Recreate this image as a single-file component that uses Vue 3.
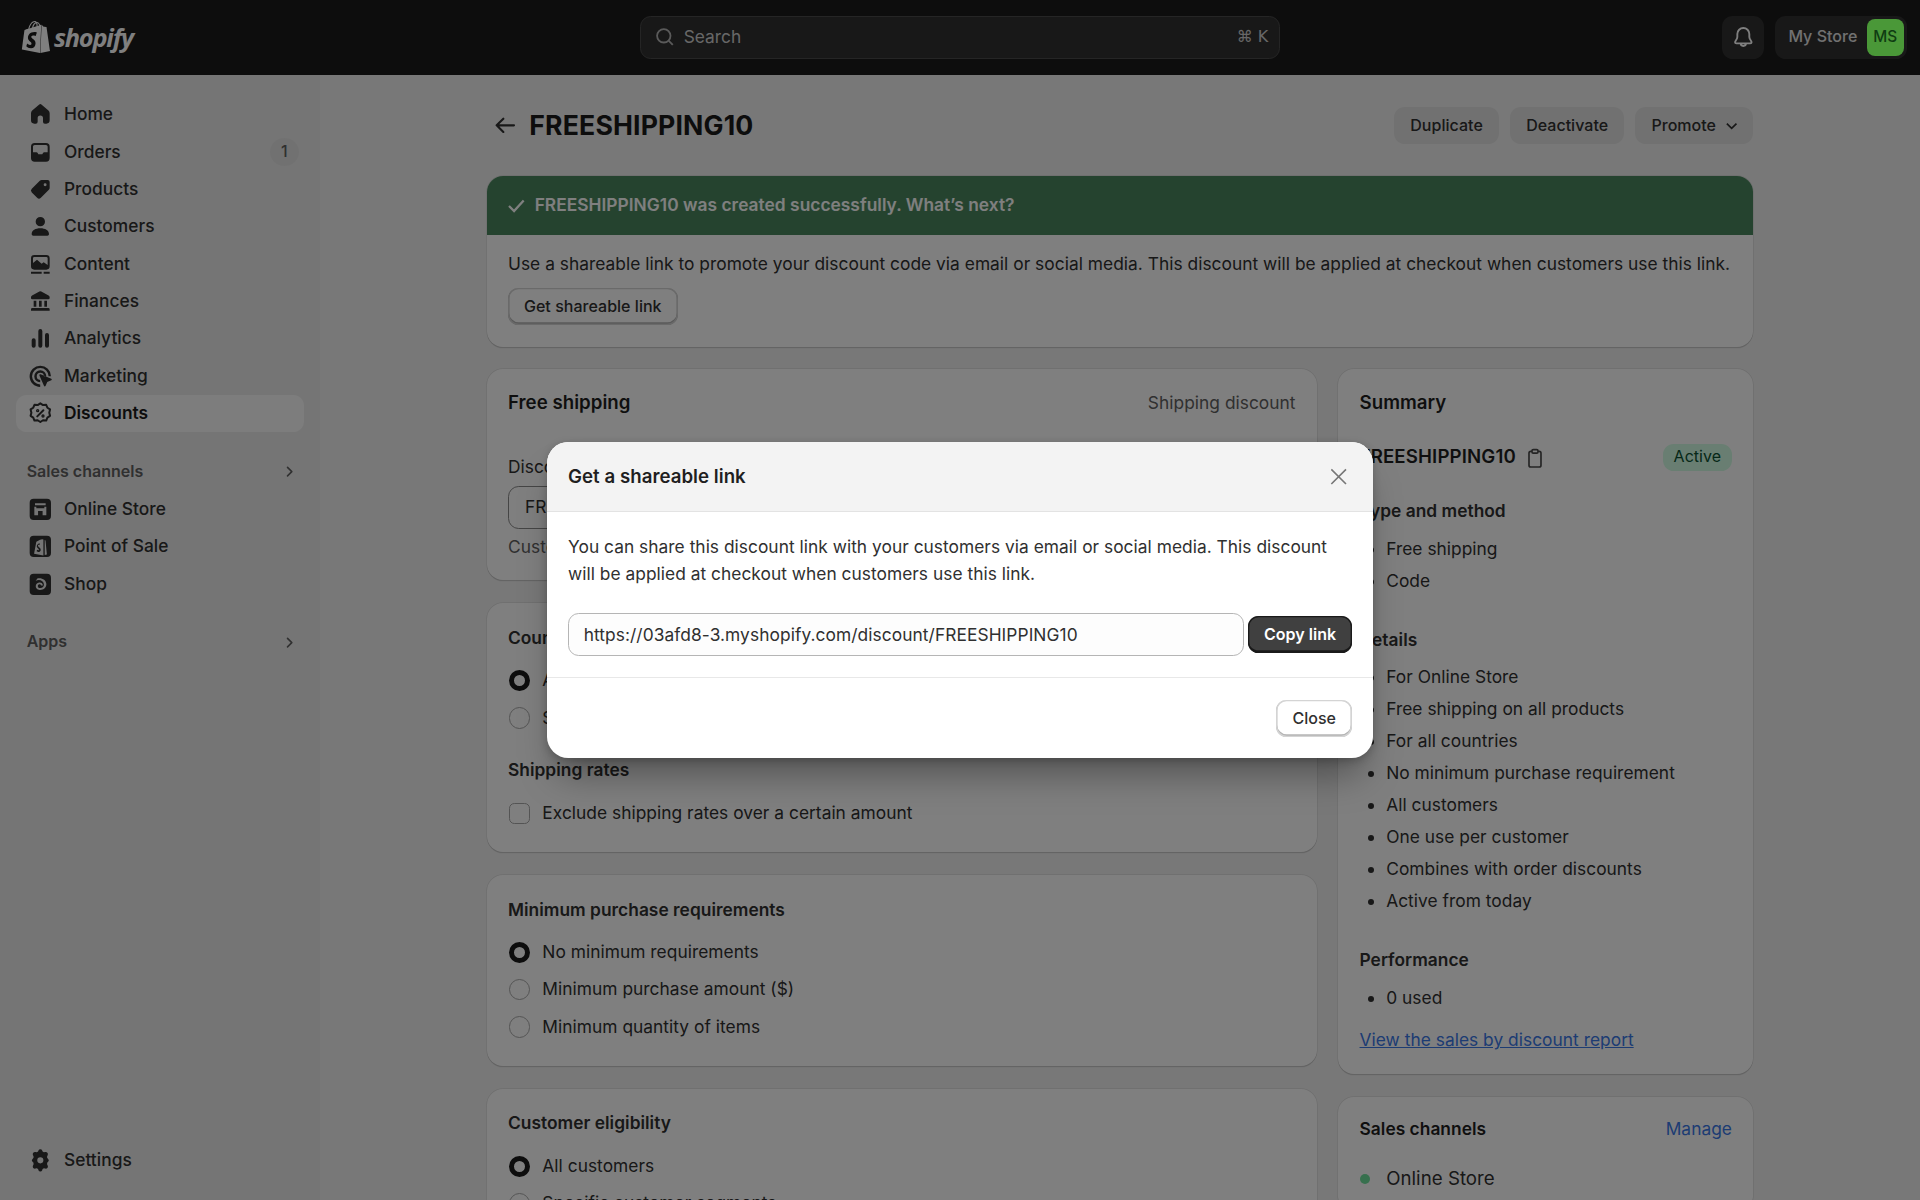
<script setup>
const navMain = [
  { label: 'Home', d: 'M9.2 2.6a1.2 1.2 0 0 1 1.6 0l5.3 4.6c.6.5.9 1.2.9 1.9v5.4a2.5 2.5 0 0 1-2.5 2.5h-1.1a1.4 1.4 0 0 1-1.4-1.4v-2.8a2 2 0 1 0-4 0v2.8A1.4 1.4 0 0 1 6.6 17H5.5A2.5 2.5 0 0 1 3 14.500V9.100c0-.7.3-1.400.9-1.900z' },
  { label: 'Orders', badge: '1', d: 'M5.75 3A2.75 2.75 0 0 0 3 5.75v8.500A2.750 2.750 0 0 0 5.750 17h8.500A2.750 2.750 0 0 0 17 14.250v-8.500A2.750 2.750 0 0 0 14.250 3zM4.500 5.750c0-.69.56-1.250 1.250-1.250h8.500c.69 0 1.250.56 1.250 1.250V10h-2.500c-.5 0-.9.3-1.100.7l-.4.8H8.500l-.4-.8c-.2-.4-.6-.7-1.100-.7H4.500z' },
  { label: 'Products', d: 'M11 3h4.500A1.500 1.500 0 0 1 17 4.500V9a2 2 0 0 1-.6 1.400l-6 6a2 2 0 0 1-2.800 0l-4-4a2 2 0 0 1 0-2.800l6-6A2 2 0 0 1 11 3zm2.600 2.400a1.100 1.100 0 1 0 0 2.200 1.100 1.100 0 0 0 0-2.200z' },
  { label: 'Customers', d: 'M10 3a3.500 3.500 0 1 1 0 7 3.500 3.500 0 0 1 0-7zM3.500 15.800c0-2.700 2.900-4.300 6.500-4.300s6.500 1.600 6.500 4.300c0 .7-.5 1.200-1.200 1.200H4.700c-.7 0-1.200-.5-1.200-1.200z' },
  { label: 'Content', d: 'M5.500 3h9A2.500 2.500 0 0 1 17 5.500v6a2.500 2.500 0 0 1-2.500 2.500h-9A2.500 2.500 0 0 1 3 11.500v-6A2.500 2.500 0 0 1 5.500 3zM4.500 9l3-2.500 3.500 3 1.500-1 3 2V5.500a1 1 0 0 0-1-1h-9a1 1 0 0 0-1 1zM3 15.500h8V17H3zM12.500 15.500H17V17h-4.500z' },
  { label: 'Finances', d: 'M9.300 2.700a1.500 1.500 0 0 1 1.400 0l5.500 2.900c.5.3.8.7.8 1.300v.6a1 1 0 0 1-1 1H4a1 1 0 0 1-1-1v-.6c0-.6.3-1 .8-1.300zM5 9.500h2V14H5zM9 9.500h2V14H9zM13 9.500h2V14h-2zM4 15h12a1 1 0 0 1 1 1v1H3v-1a1 1 0 0 1 1-1z' },
  { label: 'Analytics', d: 'M3.500 11.500a1.500 1.500 0 0 1 3 0v4a1.500 1.500 0 0 1-3 0zM8.500 4.500a1.500 1.500 0 0 1 3 0v11a1.500 1.500 0 0 1-3 0zM13.500 7.500a1.500 1.500 0 0 1 3 0v8a1.500 1.500 0 0 1-3 0z' },
  { label: 'Marketing', d: 'M10 2a8 8 0 0 1 8 7.900h-1.800A6.200 6.200 0 1 0 9.900 16.200V18A8 8 0 0 1 10 2zm0 3.500a4.500 4.500 0 0 1 4.500 4.400h-1.800a2.700 2.700 0 1 0-2.800 2.800v1.800A4.500 4.500 0 0 1 10 5.500zm-.6 3.200a.6.6 0 0 1 .8-.2l8 3.300c.5.2.5.9 0 1.100l-3 1.300-1.300 3c-.2.5-.9.500-1.100 0L9.400 9.500a.6.6 0 0 1 0-.8z' }
]
const channels = [
  { label: 'Online Store', d: 'M5 2h10a3 3 0 0 1 3 3v10a3 3 0 0 1-3 3H5a3 3 0 0 1-3-3V5a3 3 0 0 1 3-3zm1 3.500V7h8V5.500zM5.500 8v6.500h2.800v-3.200h3.400v3.200h2.800V8H13v1.200h-6V8z' },
  { label: 'Point of Sale', d: 'M5 2h10a3 3 0 0 1 3 3v10a3 3 0 0 1-3 3H5a3 3 0 0 1-3-3V5a3 3 0 0 1 3-3zm2 4.500L5.300 15.600l7 1.200V4.800a3 3 0 0 0-2.500.3zM13.300 5.200v11.400l1.600-.4L13.900 5.600zM9.700 7.800 9.400 9c-1.600-.5-1.600 1 .1 2 1.300 1.100 1 3.200-1 3.300l-1.300-.6.400-1.200c1 .7 1.500.3 1.200-.4-.7-1-1.900-1.500-1.300-3 .4-1 1.400-1.300 2.200-1.300z' },
  { label: 'Shop', d: 'M5 2h10a3 3 0 0 1 3 3v10a3 3 0 0 1-3 3H5a3 3 0 0 1-3-3V5a3 3 0 0 1 3-3zm3 3.500-1.500 1.800c3-1.300 6 0 6.200 2.700.2 2-1.700 3.300-3.500 2.700-1.500-.5-1.500-2.500 0-2.800.8-.1 1.300.4 1.300.9h1.400c0-1.500-1.300-2.400-2.800-2.200-3.200.4-3.400 4.800-.3 5.500 3 .7 6-1.500 5.700-4.500C14.200 6.600 11.200 4.800 8 5.500z' }
]
const typeItems = ['Free shipping', 'Code']
const detailItems = ['For Online Store', 'Free shipping on all products', 'For all countries', 'No minimum purchase requirement', 'All customers', 'One use per customer', 'Combines with order discounts', 'Active from today']
const minReq = [
  { label: 'No minimum requirements', on: true },
  { label: 'Minimum purchase amount ($)', on: false },
  { label: 'Minimum quantity of items', on: false }
]
</script>

<template>
  <div class="app">
    <header class="topbar">
      <div class="logo">
        <svg class="bag" viewBox="0 0 24 24"><path d="M15.337 23.979l7.216-1.561s-2.604-17.613-2.625-17.73c-.018-.116-.114-.192-.211-.192s-1.929-.136-1.929-.136-1.275-1.274-1.439-1.411c-.045-.037-.075-.057-.121-.074l-.914 21.104h.023zM11.71 11.305s-.81-.424-1.774-.424c-1.447 0-1.504.906-1.504 1.141 0 1.232 3.24 1.715 3.24 4.629 0 2.295-1.44 3.76-3.406 3.76-2.354 0-3.54-1.465-3.54-1.465l.646-2.086s1.245 1.066 2.28 1.066c.675 0 .975-.545.975-.932 0-1.619-2.654-1.694-2.654-4.359-.034-2.237 1.571-4.416 4.827-4.416 1.257 0 1.875.361 1.875.361l-.945 2.715-.02.01zM11.17.83c.136 0 .271.038.405.135-.984.465-2.064 1.639-2.508 3.992-.656.213-1.293.405-1.889.578C7.697 3.75 8.951.84 11.17.84V.83zm1.235 2.949v.135c-.754.232-1.583.484-2.394.736.466-1.777 1.333-2.645 2.085-2.971.193.501.309 1.176.309 2.1zm.539-2.234c.694.074 1.141.867 1.429 1.755-.349.114-.735.231-1.158.366v-.252c0-.752-.096-1.371-.271-1.871v.002zm2.992 1.289c-.02 0-.06.021-.078.021s-.289.075-.714.21c-.423-1.233-1.176-2.37-2.508-2.37h-.115C12.135.209 11.669 0 11.265 0 8.159 0 6.675 3.877 6.21 5.846c-1.194.365-2.063.636-2.16.674-.675.213-.694.232-.772.87-.075.462-1.83 14.063-1.83 14.063L15.009 24l.927-21.166z"/></svg>
        <span class="wordmark">shopify</span>
      </div>
      <div class="search">
        <svg class="search-icon" viewBox="0 0 20 20"><circle cx="9" cy="9" r="5.600"/><path d="M13.200 13.200 16.500 16.500"/></svg>
        <span class="search-text">Search</span>
        <span class="kbd">⌘ K</span>
      </div>
      <div class="top-actions">
        <button class="bell">
          <svg viewBox="0 0 20 20"><path d="M10 3a4.500 4.500 0 0 0-4.500 4.500v2.300c0 1-.4 1.600-1 2.400-.5.700-.7 1.100-.7 1.500 0 .4.300.8 1 .8h10.400c.7 0 1-.4 1-.8 0-.4-.2-.8-.7-1.500-.6-.8-1-1.400-1-2.400V7.500A4.500 4.500 0 0 0 10 3zM8 14.500a2 2 0 0 0 4 0"/></svg>
        </button>
        <div class="store">
          <span>My Store</span>
          <span class="avatar">MS</span>
        </div>
      </div>
    </header>

    <div class="layout">
      <nav class="sidebar">
        <ul class="nav-list">
          <li v-for="item in navMain" :key="item.label" class="nav-item">
            <svg class="nav-icon" viewBox="0 0 20 20"><path :d="item.d" fill-rule="evenodd"/></svg>
            <span>{{ item.label }}</span>
            <span v-if="item.badge" class="nav-badge">{{ item.badge }}</span>
          </li>
          <li class="nav-item active">
            <svg class="nav-icon stroke" viewBox="0 0 20 20">
              <path d="M10 2.500l2 1.300 2.400-.2.900 2.200 2 1.300-.6 2.400.6 2.400-2 1.300-.9 2.200-2.400-.2-2 1.300-2-1.300-2.400.2-.9-2.200-2-1.300.6-2.400-.6-2.400 2-1.300.9-2.200 2.400.2z"/>
              <path d="M12.300 7.700l-4.600 4.600"/>
              <circle cx="8" cy="8" r=".5"/>
              <circle cx="12" cy="12" r=".5"/>
            </svg>
            <span>Discounts</span>
          </li>
        </ul>

        <div class="nav-section">
          <div class="nav-heading">
            <span>Sales channels</span>
            <svg class="chev" viewBox="0 0 20 20"><path d="M8 6l4 4-4 4"/></svg>
          </div>
          <ul class="nav-list">
            <li v-for="item in channels" :key="item.label" class="nav-item">
              <svg class="nav-icon" viewBox="0 0 20 20"><path :d="item.d" fill-rule="evenodd"/></svg>
              <span>{{ item.label }}</span>
            </li>
          </ul>
        </div>

        <div class="nav-section">
          <div class="nav-heading">
            <span>Apps</span>
            <svg class="chev" viewBox="0 0 20 20"><path d="M8 6l4 4-4 4"/></svg>
          </div>
        </div>

        <div class="nav-bottom">
          <div class="nav-item">
            <svg class="nav-icon" viewBox="0 0 20 20"><path fill-rule="evenodd" d="M8.600 2.600a1.500 1.500 0 0 1 2.800 0l.3.8 1 .6.900-.2c1.400-.3 2.600 1.100 1.900 2.400l-.4.700v1.200l.6.700c.9 1.100.9 1.300 0 2.400l-.6.700v1.200l.4.700c.7 1.300-.5 2.700-1.900 2.400l-.9-.2-1 .6-.3.800a1.500 1.500 0 0 1-2.800 0l-.3-.8-1-.6-.9.2c-1.400.3-2.600-1.100-1.900-2.400l.4-.7v-1.200l-.6-.7c-.9-1.100-.9-1.300 0-2.400l.6-.7V6.900l-.4-.7c-.7-1.300.5-2.700 1.900-2.400l.9.200 1-.6zM10 7.700a2.300 2.300 0 1 0 0 4.600 2.300 2.300 0 0 0 0-4.600z"/></svg>
            <span>Settings</span>
          </div>
        </div>
      </nav>

      <main class="main">
        <div class="page">
          <div class="page-header">
            <button class="back">
              <svg viewBox="0 0 20 20"><path d="M16.500 10h-13M8.500 5l-5 5 5 5"/></svg>
            </button>
            <h1>FREESHIPPING10</h1>
            <div class="header-actions">
              <button class="ghost">Duplicate</button>
              <button class="ghost">Deactivate</button>
              <button class="ghost promote">Promote
                <svg viewBox="0 0 20 20"><path d="M5.500 8l4.500 4.500L14.500 8"/></svg>
              </button>
            </div>
          </div>

          <section class="card banner">
            <div class="banner-head">
              <svg viewBox="0 0 20 20"><path d="M4.500 10.500l3.800 3.800 7.200-8"/></svg>
              <span>FREESHIPPING10 was created successfully. What’s next?</span>
            </div>
            <div class="banner-body">
              <p>Use a shareable link to promote your discount code via email or social media. This discount will be applied at checkout when customers use this link.</p>
              <button class="plain">Get shareable link</button>
            </div>
          </section>

          <div class="columns">
            <div class="col-left">
              <section class="card pad first-card">
                <div class="row-between">
                  <h2>Free shipping</h2>
                  <span class="muted">Shipping discount</span>
                </div>
                <label class="field-label">Discount code</label>
                <div class="fake-input">FREESHIPPING10</div>
                <p class="muted help">Customers must enter this code at checkout.</p>
              </section>

              <section class="card pad">
                <h3>Countries</h3>
                <div class="options">
                  <div class="option"><i class="radio on"></i>All countries</div>
                  <div class="option"><i class="radio"></i>Specific countries</div>
                </div>
                <h3 class="sub">Shipping rates</h3>
                <div class="option rate"><i class="check"></i>Exclude shipping rates over a certain amount</div>
              </section>

              <section class="card pad">
                <h3>Minimum purchase requirements</h3>
                <div class="options">
                  <div v-for="o in minReq" :key="o.label" class="option">
                    <i class="radio" :class="{ on: o.on }"></i>{{ o.label }}
                  </div>
                </div>
              </section>

              <section class="card pad">
                <h3>Customer eligibility</h3>
                <div class="options">
                  <div class="option"><i class="radio on"></i>All customers</div>
                  <div class="option"><i class="radio"></i>Specific customer segments</div>
                  <div class="option"><i class="radio"></i>Specific customers</div>
                </div>
              </section>
            </div>

            <aside class="col-right">
              <section class="card pad summary">
                <h2>Summary</h2>
                <div class="code-row">
                  <strong>FREESHIPPING10</strong>
                  <svg class="clip" viewBox="0 0 20 20"><path d="M7.500 4.500H6.500A1.500 1.500 0 0 0 5 6v10a1.500 1.500 0 0 0 1.500 1.500h7A1.500 1.500 0 0 0 15 16V6a1.500 1.500 0 0 0-1.500-1.500h-1M8.500 3h3a1 1 0 0 1 1 1v1a1 1 0 0 1-1 1h-3a1 1 0 0 1-1-1V4a1 1 0 0 1 1-1z"/></svg>
                  <span class="badge">Active</span>
                </div>
                <h3>Type and method</h3>
                <ul class="bullets">
                  <li v-for="t in typeItems" :key="t">{{ t }}</li>
                </ul>
                <h3>Details</h3>
                <ul class="bullets">
                  <li v-for="t in detailItems" :key="t">{{ t }}</li>
                </ul>
                <h3>Performance</h3>
                <ul class="bullets">
                  <li>0 used</li>
                </ul>
                <a class="link report">View the sales by discount report</a>
              </section>

              <section class="card pad channels-card">
                <div class="row-between">
                  <h3 class="channels-title">Sales channels</h3>
                  <a class="manage">Manage</a>
                </div>
                <div class="channel"><i class="dot"></i>Online Store</div>
              </section>
            </aside>
          </div>
        </div>
      </main>
    </div>

    <div class="overlay">
      <div class="modal">
        <div class="modal-head">
          <h2>Get a shareable link</h2>
          <svg viewBox="0 0 20 20"><path d="M5 5l10 10M15 5 5 15"/></svg>
        </div>
        <div class="modal-body">
          <p>You can share this discount link with your customers via email or social media. This discount will be applied at checkout when customers use this link.</p>
          <div class="copy-row">
            <div class="url">https://03afd8-3.myshopify.com/discount/FREESHIPPING10</div>
            <button class="primary">Copy link</button>
          </div>
        </div>
        <div class="modal-foot">
          <button class="plain close">Close</button>
        </div>
      </div>
    </div>
  </div>
</template>

<style>
html, body { margin: 0; overflow: hidden; background: #f1f1f1; }
</style>

<style scoped>
.app {
  zoom: 1.33333;
  width: 1440px;
  height: 900px;
  overflow: hidden;
  display: flex;
  flex-direction: column;
  font-family: Inter, "Liberation Sans", sans-serif;
  font-size: 13px;
  line-height: 20px;
  letter-spacing: 0.025px;
  color: #303030;
  background: #f1f1f1;
}
h1, h2, h3, p, ul { margin: 0; padding: 0; }
ul { list-style: none; }
button { font-family: inherit; letter-spacing: inherit; border: 0; padding: 0; cursor: pointer; }

/* top bar */
.topbar {
  height: 56px;
  flex: none;
  background: #1a1a1a;
  display: grid;
  grid-template-columns: 1fr 480px 1fr;
  align-items: center;
}
.logo { display: flex; align-items: center; padding-left: 15px; gap: 1.500px; }
.bag { width: 24px; height: 24px; fill: #fff; margin-bottom: 1px; }
.wordmark {
  font-family: "Open Sans", sans-serif;
  font-style: italic;
  font-weight: 700;
  font-size: 19px;
  letter-spacing: -0.900px;
  line-height: 24px;
  color: #fff;
}
.search {
  height: 32px;
  box-sizing: border-box;
  background: #303030;
  border: 1px solid #4a4a4a;
  border-radius: 8px;
  display: flex;
  align-items: center;
  padding: 0 8px 0 9px;
  color: #cfcfcf;
}
.search-icon { width: 18px; height: 18px; fill: none; stroke: #b5b5b5; stroke-width: 1.500; margin-right: 5px; }
.search-text { flex: 1; font-size: 13px; }
.kbd { font-family: "DejaVu Sans", Inter, sans-serif; font-size: 12px; }
.top-actions { display: flex; justify-content: flex-end; align-items: center; gap: 8px; padding-right: 10px; }
.bell {
  width: 32px;
  height: 32px;
  border-radius: 8px;
  background: #303030;
  display: flex;
  align-items: center;
  justify-content: center;
}
.bell svg { width: 20px; height: 20px; fill: none; stroke: #fff; stroke-width: 1.400; }
.store {
  height: 32px;
  border-radius: 8px;
  background: #303030;
  color: #e3e3e3;
  display: flex;
  align-items: center;
  gap: 7px;
  padding: 0 2px 0 10px;
  font-size: 12px;
  font-weight: 500;
}
.avatar {
  position: relative;
  z-index: 11;
  width: 28px;
  height: 28px;
  border-radius: 6px;
  background: #4a9838;
  color: #0f3d12;
  font-size: 11.500px;
  font-weight: 500;
  display: flex;
  align-items: center;
  justify-content: center;
}

.layout { flex: 1; display: flex; min-height: 0; }

/* sidebar */
.sidebar {
  width: 240px;
  flex: none;
  box-sizing: border-box;
  background: #ebebeb;
  padding: 16px 12px 16px;
  display: flex;
  flex-direction: column;
}
.nav-item {
  height: 28px;
  display: flex;
  align-items: center;
  gap: 8px;
  padding: 0 8px;
  border-radius: 8px;
  font-weight: 450;
  color: #303030;
}
.nav-icon { width: 20px; height: 20px; fill: #303030; flex: none; }
.nav-icon.stroke { fill: none; stroke: #303030; stroke-width: 1.500; stroke-linejoin: round; stroke-linecap: round; }
.nav-item.active { background: #fafafa; font-weight: 600; color: #1a1a1a; }
.nav-badge {
  margin-left: auto;
  margin-right: -4px;
  width: 21.500px;
  height: 21px;
  border-radius: 50%;
  background: #e3e3e3;
  color: #616161;
  font-size: 12px;
  display: flex;
  align-items: center;
  justify-content: center;
}
.nav-section { margin-top: 16px; }
.nav-heading {
  height: 28px;
  display: flex;
  align-items: center;
  justify-content: space-between;
  padding: 0 1px 0 8px;
  color: #616161;
  font-size: 12px;
  font-weight: 600;
}
.chev { width: 16px; height: 16px; fill: none; stroke: #616161; stroke-width: 1.500; stroke-linecap: round; stroke-linejoin: round; margin-right: 2px; }
.nav-bottom { margin-top: auto; }

/* main */
.main { flex: 1; min-width: 0; }
.page { width: 950px; margin: 0 auto; padding-top: 24px; }
.page-header { display: flex; align-items: center; height: 28px; margin-bottom: 24px; }
.back { width: 28px; height: 28px; background: none; display: flex; align-items: center; justify-content: center; margin-right: 4px; }
.back svg { width: 20px; height: 20px; fill: none; stroke: #303030; stroke-width: 1.600; stroke-linecap: round; stroke-linejoin: round; }
h1 { font-size: 20px; font-weight: 700; line-height: 24px; color: #1a1a1a; letter-spacing: 0.100px; }
.header-actions { margin-left: auto; display: flex; gap: 8.500px; }
.ghost {
  height: 28px;
  padding: 0 12px;
  border-radius: 8px;
  background: #e3e3e3;
  color: #303030;
  font-size: 12px;
  font-weight: 550;
  display: flex;
  align-items: center;
  gap: 4px;
}
.promote { padding-right: 8px; }
.ghost svg { width: 16px; height: 16px; fill: none; stroke: #303030; stroke-width: 1.600; }

.card {
  background: #fff;
  border-radius: 12px;
  box-shadow: 0 1px 0 rgba(26, 26, 26, 0.12), 0 0 0 0.500px rgba(26, 26, 26, 0.1);
  overflow: hidden;
}
.banner { margin-bottom: 16.500px; }
.banner-head {
  height: 44px;
  box-sizing: border-box;
  background: #4a875e;
  color: #fff;
  font-weight: 600;
  display: flex;
  align-items: center;
  gap: 4px;
  padding: 0 12px;
}
.banner-head svg { width: 20px; height: 20px; fill: none; stroke: #fff; stroke-width: 1.700; }
.banner-body { padding: 12px 16px 16px; height: 84px; box-sizing: border-box; }
.plain {
  height: 27.500px;
  padding: 0 12px;
  margin-top: 8px;
  border-radius: 8px;
  background: #fff;
  color: #303030;
  font-size: 12px;
  font-weight: 550;
  box-shadow: inset 0 0 0 1px #d4d4d4, inset 0 -1px 0 1px #b5b5b5;
}

.columns { display: grid; grid-template-columns: 622.670px 311.330px; gap: 16px; align-items: start; }
.col-left, .col-right { display: flex; flex-direction: column; gap: 17.500px; }
.pad { padding: 16px 16px 15px; }
.row-between { display: flex; justify-content: space-between; align-items: center; }
h2, .channels-title { font-size: 14px; font-weight: 600; line-height: 20px; color: #1f1f1f; }
h3 { font-size: 13px; font-weight: 600; line-height: 20px; color: #303030; }
.muted { color: #616161; }
.first-card { height: 158.500px; box-sizing: border-box; }
.field-label { display: block; margin-top: 28px; }
.fake-input { height: 32px; box-sizing: border-box; border: 1px solid #8a8a8a; border-radius: 8px; margin-top: 4px; padding: 5px 12px; }
.help { margin-top: 4px; }

.options { margin-top: 8px; }
.option { height: 28px; display: flex; align-items: center; gap: 9px; }
.rate { margin-top: 7.800px; }
.sub { margin-top: 15.700px; }
.radio {
  width: 16px;
  height: 16px;
  box-sizing: border-box;
  border-radius: 50%;
  border: 1px solid #a8a8a8;
  flex: none;
  margin-left: 0.800px;
}
.radio.on { border: 4.500px solid #1a1a1a; }
.check {
  width: 16px;
  height: 16px;
  box-sizing: border-box;
  border-radius: 4px;
  border: 1px solid #a8a8a8;
  flex: none;
  margin-left: 0.800px;
}

.code-row { display: flex; align-items: center; margin-top: 20.700px; margin-bottom: 20.500px; height: 20px; }
.code-row strong { font-size: 14px; font-weight: 600; color: #1f1f1f; letter-spacing: 0.100px; }
.clip { width: 18px; height: 18px; fill: none; stroke: #4a4a4a; stroke-width: 1.400; margin-left: 5px; }
.badge {
  margin-left: auto;
  height: 20px;
  width: 52px;
  border-radius: 8px;
  background: #d2fde4;
  color: #0c5132;
  font-size: 12px;
  display: flex;
  align-items: center;
  justify-content: center;
}
.bullets { list-style: disc; padding-left: 20px; margin-top: 8.400px; margin-bottom: 23.900px; }
.bullets li { height: 20px; margin-bottom: 4px; }
.link { color: #3b78e7; text-decoration: underline; }
.report { display: block; margin-top: -12px; }
.channels-card { padding-top: 14.500px; }
.channels-title { font-size: 13px; }
.manage { color: #3b78e7; }
.channel { display: flex; align-items: center; gap: 12px; margin-top: 17px; font-size: 14px; }
.dot { width: 8px; height: 8px; border-radius: 50%; background: #6fe09c; }

/* modal */
.overlay {
  position: absolute;
  inset: 0;
  z-index: 10;
  background: rgba(0, 0, 0, 0.5);
  display: flex;
  align-items: center;
  justify-content: center;
}
.modal {
  width: 620px;
  background: #fff;
  border-radius: 16px;
  overflow: hidden;
  box-shadow: 0 20px 28px -8px rgba(0, 0, 0, 0.35), 0 2px 6px rgba(0, 0, 0, 0.2);
}
.modal-head {
  height: 52.500px;
  box-sizing: border-box;
  background: #f3f3f3;
  border-bottom: 1px solid #e3e3e3;
  display: flex;
  align-items: center;
  justify-content: space-between;
  padding: 1.500px 16px 0;
}
.modal-head svg { width: 22px; height: 22px; fill: none; stroke: #777; stroke-width: 1.100; margin-right: -1px; }
.modal-body { padding: 17px 16px 16.500px; }
.modal-body p { margin-bottom: 19px; }
.copy-row { display: flex; align-items: center; gap: 3px; }
.url {
  flex: 1;
  height: 32px;
  box-sizing: border-box;
  border: 1px solid #b5b5b5;
  border-radius: 8px;
  background: #fdfdfd;
  padding: 6px 11px 4px;
  letter-spacing: 0.060px;
}
.primary {
  flex: none;
  width: 78px;
  height: 28px;
  border-radius: 8px;
  background: #404040;
  color: #fff;
  font-size: 12px;
  font-weight: 600;
  box-shadow: inset 0 0 0 1px #1a1a1a, inset 0 -2px 0 #1a1a1a;
}
.modal-foot {
  border-top: 1px solid #e8e8e8;
  padding: 16px;
  display: flex;
  justify-content: flex-end;
}
.close { margin-top: 0; height: 28px; }
</style>
